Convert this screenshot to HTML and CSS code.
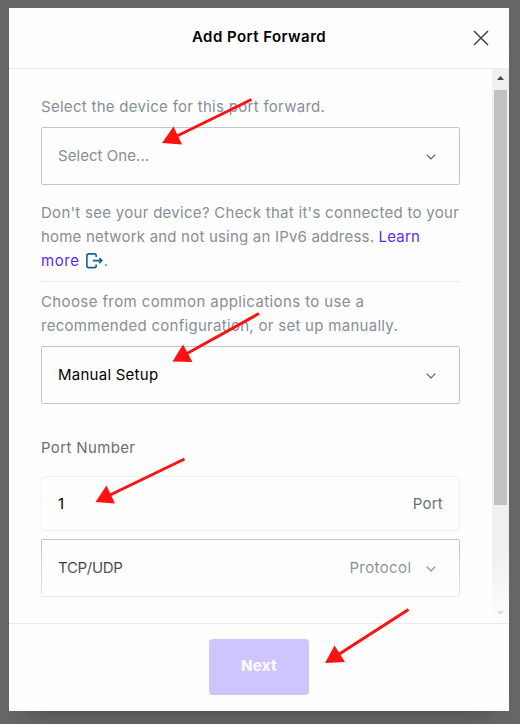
FILE: index.html
```html
<!DOCTYPE html>
<html lang="en">
<head>
<meta charset="utf-8">
<title>Add Port Forward</title>
<link rel="stylesheet" href="styles.css">
</head>
<body>
<div class="modal">
  <header class="header">
    <h1 class="title">Add Port Forward</h1>
    <svg class="close" width="16" height="16" viewBox="0 0 16 16"><path d="M1 1 15 15M15 1 1 15"/></svg>
  </header>
  <div class="body">
    <main class="content">
      <p class="text"><span class="l1">Select the device for this port forward.</span></p>
      <div class="select first">
        <span class="placeholder">Select One...</span>
        <svg class="chevron" width="10" height="6" viewBox="0 0 10 6"><path d="M.7.7 5 4.9 9.3.7"/></svg>
      </div>
      <p class="text help"><span class="l2">Don't see your device? Check that it's connected to your</span><br><span class="l3">home network and not using an IPv6 address. <a class="link">Learn</a></span><br><span class="l4"><a class="link">more</a></span><svg class="external" width="17" height="16" viewBox="0 0 17 16"><path d="M10.2 4V2.8Q10.2.9 8.3.9H2.8Q.9.9.9 2.8V12.7Q.9 14.6 2.8 14.6H8.3Q10.2 14.6 10.2 12.7V11.4M6.8 7.6H15.8M13.2 5 15.8 7.6 13.2 10.2"/></svg>.</p>
      <p class="text apps"><span class="l5">Choose from common applications to use a</span><br><span class="l6">recommended configuration, or set up manually.</span></p>
      <div class="select">
        <span class="value">Manual Setup</span>
        <svg class="chevron" width="10" height="6" viewBox="0 0 10 6"><path d="M.7.7 5 4.9 9.3.7"/></svg>
      </div>
      <div class="label"><span class="l7">Port Number</span></div>
      <div class="input"><span class="number">1</span><span class="port">Port</span></div>
      <div class="select">
        <span class="protocol-value">TCP/UDP</span>
        <span class="protocol">Protocol</span>
        <svg class="chevron" width="10" height="6" viewBox="0 0 10 6"><path d="M.7.7 5 4.9 9.3.7"/></svg>
      </div>
    </main>
    <div class="scrollbar">
      <svg width="7" height="4" viewBox="0 0 7 4"><path d="M0 4 3.5 0 7 4Z"/></svg>
      <div class="thumb"></div>
      <svg class="down" width="7" height="4" viewBox="0 0 7 4"><path d="M0 0 3.5 4 7 0Z"/></svg>
    </div>
    <div class="fade"></div>
  </div>
  <footer class="footer"><button class="next">Next</button></footer>
</div>
<svg class="arrows" width="520" height="724" viewBox="0 0 520 724">
  <path class="shaft" d="M251.5 99.5 177 136M259 313.5 187 353.5M184.5 459 110 495M408.5 609.5 338.5 654.5"/>
  <path class="head" d="M162 143 173.5 126.5 182 144.5ZM172.5 361.5 183 344.5 192.5 362ZM95.5 502 106.5 485.5 115 503.5ZM325 663 334.5 645.5 345 662Z"/>
</svg>
</body>
</html>
```

FILE: styles.css
```css
* { box-sizing: border-box; }
body {
  margin: 0;
  width: 520px;
  height: 724px;
  padding: 8px 11px 13px 9px;
  background: #666;
  overflow: hidden;
  font-family: Inter, "Liberation Sans", sans-serif;
  font-size: 15px;
  font-weight: 400;
}
.modal {
  display: flex;
  flex-direction: column;
  width: 500px;
  height: 703px;
  background: #fefefe;
  box-shadow: 0 18px 20px -18px rgba(0, 0, 0, .3);
}
.header {
  display: flex;
  align-items: center;
  justify-content: flex-end;
  height: 61px;
  padding-right: 20.5px;
  border-bottom: 1px solid #e6e9ef;
}
.title {
  flex: 1;
  margin: 0 -36.5px 3px 0;
  text-align: center;
  font-size: 15px;
  font-weight: 600;
  letter-spacing: .45px;
  color: #000;
}
.close { fill: none; stroke: #444; stroke-width: 1.5; }
.body { position: relative; display: flex; height: 554px; }
.content { width: 483px; padding: 26px 32px 0; }
.text { margin: 0; line-height: 24px; color: #868e96; white-space: nowrap; }
.l1, .l2, .l6 { letter-spacing: .29px; }
.l3 { letter-spacing: .2px; }
.l4 { letter-spacing: .6px; }
.l5 { letter-spacing: .39px; }
.l7 { letter-spacing: .36px; }
.select, .input {
  display: flex;
  align-items: center;
  height: 58px;
  margin-top: 8px;
  padding: 0 23px 0 16px;
  border: 1px solid #c5c6cc;
  border-radius: 2px;
  background: #fefefe;
}
.select > span { margin-bottom: 2px; }
.select > span:first-child { margin-right: auto; }
.placeholder { color: #868e96; letter-spacing: .05px; }
.value, .number { color: #000; }
.value { letter-spacing: .25px; }
.chevron { margin: 2px .5px 0 0; fill: none; stroke: #55585c; stroke-width: 1.1; }
.help { margin-top: 16px; padding-bottom: 8px; border-bottom: 1px solid #ebebee; }
.link { color: #5a2ded; }
.external { margin: 0 1px 0 6px; vertical-align: -3px; fill: none; stroke: #116389; stroke-width: 1.6; }
.apps { margin-top: 8px; }
.label { margin-top: 32px; line-height: 24px; color: #696e75; }
.input {
  justify-content: space-between;
  height: 55px;
  margin-top: 16px;
  padding-right: 16px;
  border-color: #f1f1f3;
  border-radius: 4px;
}
.port { color: #696e75; letter-spacing: .25px; }
.protocol-value { color: #111; letter-spacing: -.3px; }
.protocol { margin-right: 14px; color: #6c7278; letter-spacing: .4px; }
.scrollbar {
  display: flex;
  flex-direction: column;
  align-items: center;
  width: 17px;
  padding: 7px 0 8px;
  background: #f0f0f0;
}
.scrollbar svg { fill: #444; }
.scrollbar .down { margin-top: auto; fill: #505050; }
.thumb { width: 13px; height: 415px; margin-top: 10px; background: #c1c1c1; }
.fade {
  position: absolute;
  inset: auto 0 0;
  height: 70px;
  background: linear-gradient(rgba(254, 254, 254, .05), rgba(254, 254, 254, .95));
}
.footer {
  display: flex;
  justify-content: center;
  height: 88px;
  padding-top: 15px;
  border-top: 1px solid #ebebee;
}
.next {
  width: 100px;
  height: 56px;
  padding: 0 0 3px;
  border: 0;
  border-radius: 4px;
  background: #cfc4fc;
  color: #faf9ff;
  font: 800 15px Inter, sans-serif;
  letter-spacing: .3px;
}
.arrows { position: absolute; inset: 0; }
.shaft { fill: none; stroke: #ff1111; stroke-width: 3; }
.head { fill: #ff1111; }
```
